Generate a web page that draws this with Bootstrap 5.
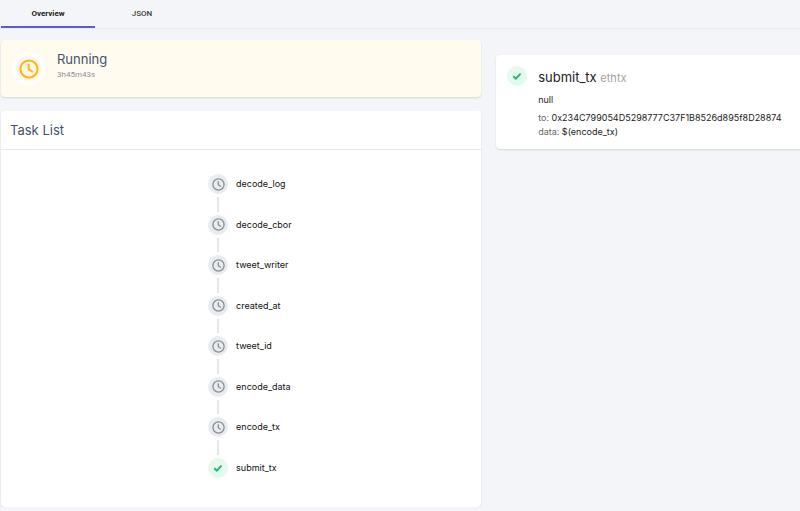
<!DOCTYPE html>
<html lang="en">
<head>
<meta charset="utf-8">
<meta name="viewport" content="width=device-width, initial-scale=1">
<title>Job run</title>
<link href="https://cdn.jsdelivr.net/npm/bootstrap@5.3.0/dist/css/bootstrap.min.css" rel="stylesheet">
<style>
  body { background: #f4f5f8; font-family: Inter, "Liberation Sans", sans-serif; font-size: 9px; line-height: 14px; color: #222; }
  .run-tabs { border-bottom: 1px solid #e8eaed; padding-left: 1px; }
  .run-tabs .nav-link { width: 94px; padding: 7px 0 5px; height: 28px; font-family: Roboto, sans-serif; font-size: 8px; font-weight: 500; color: #3d3d3d; border-radius: 0; border-bottom: 2px solid transparent; }
  .run-tabs .nav-link.active { font-weight: 700; color: #222; border-bottom-color: #5f5bd0; }
  .run-grid { display: grid; grid-template-columns: minmax(0, 19fr) minmax(0, 12fr); column-gap: 15px; align-items: start; padding-top: 11px; }
  .left-col { padding-left: 1px; }
  .panel { background: #fff; border-radius: 4px; box-shadow: 0 1px 2px rgba(0,0,0,.13); }
  .status-panel { background: #fffbef; padding: 10px 11px; gap: 12px; min-height: 57px; }
  .halo { width: 33px; height: 33px; margin-top: 2px; border-radius: 50%; background: #fff6e0; border: 4px solid #fff; }
  .title-text { font-size: 13px; line-height: 18px; font-weight: 400; color: #42526e; }
  .elapsed { font-family: Roboto, sans-serif; font-size: 8px; line-height: 14px; color: #8b919b; }
  .task-panel { margin-top: 14px; }
  .list-head { padding: 10px 9px; border-bottom: 1px solid #e7e9ec; }
  .list-body { padding: 24px 9px 29px; }
  .task-list { height: 304px; width: 226px; padding-left: 80px; }
  .task-list li { flex: 1 1 0; gap: 8px; color: #111; line-height: 20px; }
  .task-list li:last-child { flex: none; }
  .dot { width: 20px; height: 20px; flex: none; border-radius: 50%; background: #e9ecef; }
  .dot.done { background: #e4faef; }
  .task-line { width: 2px; background: #e5e6e8; margin: 3px 0; }
  .right-col { padding-top: 15px; }
  .detail-panel { padding: 11px 11px 10px; gap: 11px; border-radius: 4px 0 0 4px; }
  .kind { color: #a2a2a2; font-size: 11px; }
  .muted { color: #666; }
  .detail-name { font-size: 13px; line-height: 22px; color: #222; }
</style>
<script src="https://cdn.jsdelivr.net/npm/bootstrap@5.3.0/dist/js/bootstrap.bundle.min.js"></script>
</head>
<body>
<svg class="d-none" aria-hidden="true">
  <symbol id="clock" viewBox="0 0 20 20"><g fill="none" stroke="currentColor" stroke-width="2"><circle cx="10" cy="10" r="8.6"/><path d="M9.7 5v5.3l4 2.7"/></g></symbol>
  <symbol id="check" viewBox="0 0 10 10"><path d="M1.3 5.2 3.8 7.6 8.6 2.6" fill="none" stroke="currentColor" stroke-width="1.9"/></symbol>
</svg>
<nav class="nav run-tabs">
  <a class="nav-link active text-center" href="#overview" aria-current="page">Overview</a>
  <a class="nav-link text-center" href="#json">JSON</a>
</nav>
<main class="run-grid" id="overview">
  <div class="left-col">
    <section class="panel status-panel d-flex">
      <div class="halo d-flex align-items-center justify-content-center"><svg class="flex-shrink-0" width="20" height="20" color="#fbb321"><use href="#clock"/></svg></div>
      <div><h1 class="title-text mb-0">Running</h1><div class="elapsed">3h45m43s</div></div>
    </section>
    <section class="panel task-panel">
      <div class="list-head"><h2 class="title-text mb-0">Task List</h2></div>
      <div class="list-body">
        <ul class="task-list list-unstyled d-flex flex-column mb-0 mx-auto">
          <li class="d-flex"><div class="d-flex flex-column align-items-center"><span class="dot d-flex align-items-center justify-content-center"><svg width="13" height="13" color="#888d94"><use href="#clock"/></svg></span><span class="task-line flex-grow-1"></span></div>decode_log</li>
          <li class="d-flex"><div class="d-flex flex-column align-items-center"><span class="dot d-flex align-items-center justify-content-center"><svg width="13" height="13" color="#888d94"><use href="#clock"/></svg></span><span class="task-line flex-grow-1"></span></div>decode_cbor</li>
          <li class="d-flex"><div class="d-flex flex-column align-items-center"><span class="dot d-flex align-items-center justify-content-center"><svg width="13" height="13" color="#888d94"><use href="#clock"/></svg></span><span class="task-line flex-grow-1"></span></div>tweet_writer</li>
          <li class="d-flex"><div class="d-flex flex-column align-items-center"><span class="dot d-flex align-items-center justify-content-center"><svg width="13" height="13" color="#888d94"><use href="#clock"/></svg></span><span class="task-line flex-grow-1"></span></div>created_at</li>
          <li class="d-flex"><div class="d-flex flex-column align-items-center"><span class="dot d-flex align-items-center justify-content-center"><svg width="13" height="13" color="#888d94"><use href="#clock"/></svg></span><span class="task-line flex-grow-1"></span></div>tweet_id</li>
          <li class="d-flex"><div class="d-flex flex-column align-items-center"><span class="dot d-flex align-items-center justify-content-center"><svg width="13" height="13" color="#888d94"><use href="#clock"/></svg></span><span class="task-line flex-grow-1"></span></div>encode_data</li>
          <li class="d-flex"><div class="d-flex flex-column align-items-center"><span class="dot d-flex align-items-center justify-content-center"><svg width="13" height="13" color="#888d94"><use href="#clock"/></svg></span><span class="task-line flex-grow-1"></span></div>encode_tx</li>
          <li class="d-flex"><span class="dot done d-flex align-items-center justify-content-center"><svg width="10" height="10" color="#27b46e"><use href="#check"/></svg></span>submit_tx</li>
        </ul>
      </div>
    </section>
  </div>
  <div class="right-col">
    <section class="panel detail-panel d-flex">
      <span class="dot done d-flex align-items-center justify-content-center"><svg width="10" height="10" color="#27b46e"><use href="#check"/></svg></span>
      <div>
        <h2 class="detail-name fw-normal mb-0">submit_tx <span class="kind">ethtx</span></h2>
        <div class="my-1">null</div>
        <div><span class="muted">to:</span> 0x234C799054D5298777C37F1B8526d895f8D28874</div>
        <div><span class="muted">data:</span> $(encode_tx)</div>
      </div>
    </section>
  </div>
</main>
</body>
</html>
